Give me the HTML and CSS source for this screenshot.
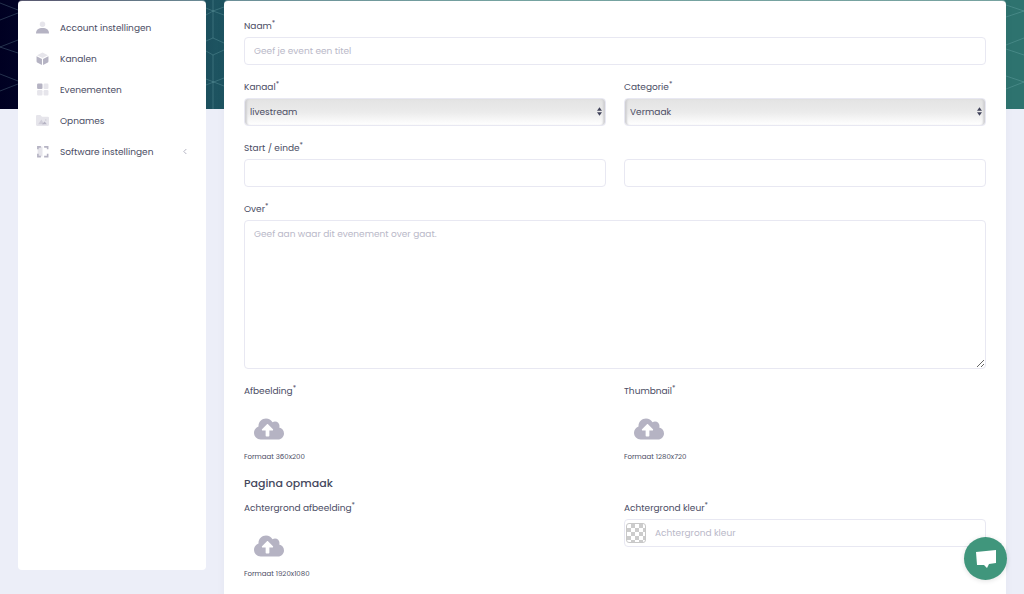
FILE: index.html
```html
<!DOCTYPE html>
<html lang="nl">
<head>
<meta charset="utf-8">
<meta name="viewport" content="width=device-width, initial-scale=1">
<title>Evenement</title>
<link rel="stylesheet" href="styles.css">
</head>
<body>
<svg class="banner" aria-hidden="true">
  <defs>
    <linearGradient id="bannerFill">
      <stop offset="0" stop-color="#000022"/><stop offset=".05" stop-color="#04082b"/><stop offset=".21" stop-color="#1d5360"/><stop offset=".5" stop-color="#2c7470"/><stop offset="1" stop-color="#2e736f"/>
    </linearGradient>
    <symbol id="cloud" viewBox="0 32 640 448"><path d="M537.6 226.6c4.1-10.7 6.4-22.4 6.4-34.6 0-53-43-96-96-96-19.7 0-38.1 6-53.3 16.200C367 64.200 315.300 32 256 32c-88.400 0-160 71.600-160 160 0 2.700.1 5.400.2 8.100C40.200 219.800 0 273.200 0 336c0 79.500 64.500 144 144 144h368c70.700 0 128-57.300 128-128 0-61.900-44-113.600-102.400-125.400zM393.400 288H328v112c0 8.800-7.200 16-16 16h-48c-8.800 0-16-7.200-16-16V288h-65.400c-14.300 0-21.400-17.200-11.300-27.300l105.400-105.400c6.200-6.200 16.400-6.200 22.600 0l105.400 105.400c10.100 10.100 2.900 27.300-11.300 27.300z"/></symbol>
  </defs>
  <rect width="100%" height="100%" fill="url(#bannerFill)"/>
  <g class="mesh">
    <path d="M0 3 18 10M0 20 18 13M18 40 0 47 18 53M0 74 18 81M0 91 18 84"/>
    <path d="M206 8 213 11 224 15M206 15 213 11 224 7M213 0V38M206 41 213 38 224 43M206 51 213 55 224 50M213 55V109M206 79 224 86M206 85 224 78"/>
  </g>
  <svg x="100%" width="1" height="109" overflow="visible" class="mesh">
    <path d="M-18 5 0 11-18 17M0 38-18 45M-18 49 0 55M-18 76 0 82-18 89"/>
  </svg>
</svg>
<div class="page">
  <nav class="sidebar">
    <a href="#" class="item">
      <svg class="icon" viewBox="0 0 24 24"><circle cx="12" cy="6" r="5" class="pale"/><path d="M0 23c0-7 5-10 12-10s12 3 12 10z"/></svg>
      <span>Account instellingen</span>
    </a>
    <a href="#" class="item">
      <svg class="icon" viewBox="0 0 24 24"><path class="pale" d="M12 1 22 6 12 11 2 6z"/><path d="M1 8 11 13V24L3 20Q1 19 1 17zM23 8 13 13V24L21 20Q23 19 23 17z"/></svg>
      <span>Kanalen</span>
    </a>
    <a href="#" class="item">
      <svg class="icon" viewBox="0 0 24 24"><rect x="2" y="1" width="10" height="10" rx="2"/><g class="pale"><rect x="14" y="1" width="9" height="10" rx="2"/><rect x="2" y="13" width="10" height="10" rx="2"/><rect x="14" y="13" width="9" height="10" rx="2"/></g></svg>
      <span>Evenementen</span>
    </a>
    <a href="#" class="item">
      <svg class="icon" viewBox="0 0 24 24"><path class="pale" d="M0 4Q0 2 2 2H8L11 5H22Q24 5 24 7V20Q24 22 22 22H2Q0 22 0 20z"/><path class="mid" d="M4 19 10 10 15 19z"/><path d="M11 19 16 14 20 19z"/><circle class="mid" cx="18" cy="11" r="1.5"/></svg>
      <span>Opnames</span>
    </a>
    <a href="#" class="item">
      <svg class="icon" viewBox="0 0 24 24"><rect class="pale" x="3" y="3" width="9" height="18"/><path d="M2 2H9V5H5V8H2zM15 2H23V8H20V5H15zM2 16H5V20H9V23H2zM20 16H23V23H15V20H20z"/></svg>
      <span>Software instellingen</span>
      <svg class="chevron" viewBox="0 0 6 8"><path d="M4 1 1 4 4 7"/></svg>
    </a>
  </nav>
  <main class="card">
    <form class="form">
      <div class="field wide">
        <label for="naam">Naam<sup>*</sup></label>
        <input id="naam" class="control" type="text" placeholder="Geef je event een titel">
      </div>
      <div class="field">
        <label for="kanaal">Kanaal<sup>*</sup></label>
        <div class="picker"><select id="kanaal" class="control"><option>livestream</option></select>
        <svg class="arrows" viewBox="0 0 6 10"><path d="M3 0 6 4H0zM0 6H6L3 10z"/></svg></div>
      </div>
      <div class="field">
        <label for="categorie">Categorie<sup>*</sup></label>
        <div class="picker"><select id="categorie" class="control"><option>Vermaak</option></select>
        <svg class="arrows" viewBox="0 0 6 10"><path d="M3 0 6 4H0zM0 6H6L3 10z"/></svg></div>
      </div>
      <div class="field wide">
        <label for="start">Start / einde<sup>*</sup></label>
        <div class="pair">
          <input id="start" class="control" type="text">
          <input class="control" type="text" aria-label="Einde">
        </div>
      </div>
      <div class="field wide">
        <label for="over">Over<sup>*</sup></label>
        <textarea id="over" class="control" placeholder="Geef aan waar dit evenement over gaat."></textarea>
      </div>
      <div class="field">
        <span>Afbeelding<sup>*</sup></span>
        <button type="button" class="upload" aria-label="Afbeelding uploaden"><svg><use href="#cloud"/></svg></button>
        <small>Formaat 360x200</small>
      </div>
      <div class="field">
        <span>Thumbnail<sup>*</sup></span>
        <button type="button" class="upload" aria-label="Thumbnail uploaden"><svg><use href="#cloud"/></svg></button>
        <small>Formaat 1280x720</small>
      </div>
      <h2 class="wide">Pagina opmaak</h2>
      <div class="field">
        <span>Achtergrond afbeelding<sup>*</sup></span>
        <button type="button" class="upload" aria-label="Achtergrond uploaden"><svg><use href="#cloud"/></svg></button>
        <small>Formaat 1920x1080</small>
      </div>
      <div class="field">
        <label for="kleur">Achtergrond kleur<sup>*</sup></label>
        <div class="control color">
          <button type="button" class="swatch" aria-label="Kies kleur"></button>
          <input id="kleur" type="text" placeholder="Achtergrond kleur">
        </div>
      </div>
    </form>
  </main>
</div>
<button type="button" class="chat" aria-label="Chat"><svg viewBox="0 0 20 18"><path d="M0 2 20 0V13L13 14 11 18 8 15 1 15z"/></svg></button>
</body>
</html>
```
FILE: styles.css
```css
* { box-sizing: border-box; }
html { height: 100%; overflow: hidden; }
body {
  margin: 0;
  height: 100%;
  overflow: hidden;
  background: #eceef8;
  color: #4a4c63;
  font: 9px/16px Poppins, Inter, sans-serif;
}
input, select, textarea, button { font: inherit; color: inherit; }
.banner { position: absolute; top: 0; left: 0; width: 100%; height: 109px; }
.mesh { fill: none; stroke: #8ec8cc; stroke-opacity: .25; }
.page { position: relative; display: flex; align-items: flex-start; gap: 18px; padding: 1px 18px 0; }
.sidebar {
  width: 188px;
  flex: none;
  height: calc(100vh - 25px);
  padding: 11px 18px;
  background: #fff;
  border-radius: 4px;
  box-shadow: 0 -1px rgba(255, 255, 255, .35);
}
.item { display: flex; align-items: center; height: 31px; gap: 11px; color: inherit; text-decoration: none; }
.icon { width: 13px; height: 13px; fill: #b5b3c3; }
.pale { fill: #e6e5eb; }
.mid { fill: #d0ced9; }
.chevron { width: 5px; height: 7px; margin-left: auto; fill: none; stroke: #a5a5b8; }
.card {
  flex: 1;
  min-width: 0;
  padding: 17px 20px 20px;
  background: #fff;
  border-radius: 4px;
  box-shadow: 0 -1px rgba(255, 255, 255, .35), 0 0 8px rgba(82, 63, 105, .05);
}
.form { display: grid; grid-template-columns: 1fr 1fr; gap: 14px 18px; }
.wide { grid-column: 1 / -1; }
.field { display: flex; flex-direction: column; align-items: stretch; gap: 3px; min-width: 0; }
sup { font-size: 7px; line-height: 0; }
.control {
  width: 100%;
  height: 28px;
  padding: 0 9px;
  background: #fff;
  border: 1px solid #e8e8f2;
  border-radius: 4px;
  outline: 0;
}
::placeholder { color: #b9b8c8; opacity: 1; }
.pair { display: grid; grid-template-columns: 1fr 1fr; gap: 18px; }
.picker { position: relative; display: flex; }
select.control {
  appearance: none;
  padding: 0 5px;
  background: linear-gradient(#e3e3e3, #ebebeb 50%, #fff);
  box-shadow: inset 3px 0 2px -1px #d0d0d3, inset -3px 0 2px -1px #d0d0d3;
}
.arrows { position: absolute; right: 4px; top: 9px; width: 5px; height: 9px; fill: #41435a; pointer-events: none; }
textarea.control { height: 149px; padding: 5px 9px; resize: vertical; display: block; }
.upload { align-self: flex-start; margin: 16px 0 6px 10px; padding: 0; border: 0; background: none; }
.upload svg { display: block; width: 30px; height: 22px; fill: #b5b3c3; }
small { font-size: 7px; }
h2 { margin: -4px 0 -5px; font-size: 11px; line-height: 16px; font-weight: 500; color: #45475d; }
.color { display: flex; align-items: center; gap: 9px; padding: 0 1px; }
.color input { flex: 1; min-width: 0; padding: 0; border: 0; background: none; outline: 0; }
.swatch {
  width: 20px;
  height: 20px;
  padding: 0;
  border: 1px solid #c8c8c8;
  border-radius: 3px;
  background: repeating-conic-gradient(#ccc 0 25%, #fff 0 50%) 0 0 / 8px 8px;
}
.chat {
  position: fixed;
  right: 17px;
  bottom: 14px;
  width: 43px;
  height: 43px;
  display: grid;
  place-items: center;
  padding: 0;
  border: 0;
  border-radius: 50%;
  background: #40967c;
  box-shadow: 0 1px 5px rgba(0, 0, 0, .12);
}
.chat svg { width: 20px; height: 18px; fill: #fff; }
```
